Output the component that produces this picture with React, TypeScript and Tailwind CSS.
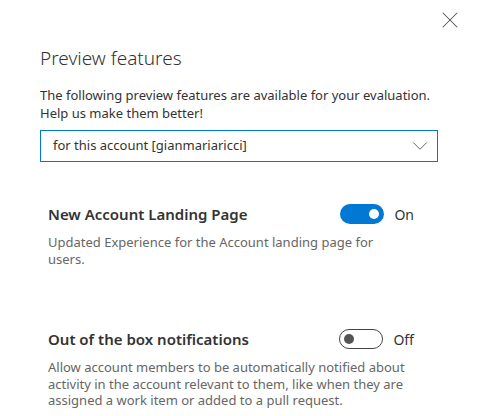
import { X, ChevronDown } from "lucide-react";

const features = [
  {
    title: "New Account Landing Page",
    on: true,
    desc: "Updated Experience for the Account landing page for users.",
  },
  {
    title: "Out of the box notifications",
    on: false,
    desc: "Allow account members to be automatically notified about activity in the account relevant to them, like when they are assigned a work item or added to a pull request.",
  },
];

function Toggle({ on }: { on: boolean }) {
  return (
    <div className="flex items-center gap-[10px]">
      {on ? (
        <div className="w-[44px] h-[20px] rounded-full bg-[#0078d4] flex items-center justify-end pr-[5px]">
          <div className="w-[10px] h-[10px] rounded-full bg-white" />
        </div>
      ) : (
        <div className="w-[44px] h-[20px] rounded-full border border-[#444] flex items-center pl-[4px]">
          <div className="w-[10px] h-[10px] rounded-full bg-[#555]" />
        </div>
      )}
      <span className="text-[14px] text-[#333]">{on ? "On" : "Off"}</span>
    </div>
  );
}

export default function App() {
  return (
    <div
      className="w-[478px] h-[416px] bg-white relative overflow-hidden"
      style={{ fontFamily: '"Noto Sans", "Open Sans", sans-serif' }}
    >
      <button className="absolute top-[6px] right-[14px] text-[#555]">
        <X size={28} strokeWidth={0.9} />
      </button>

      <div className="pt-[44px] pl-[40px] pr-[40px]">
        <h1 className="text-[19px] font-light text-[#333] leading-[28px]">Preview features</h1>

        <p className="mt-[14px] text-[13px] leading-[18px] text-[#333]">
          The following preview features are available for your evaluation.
          <br />
          Help us make them better!
        </p>

        <div className="mt-[8px] h-[32px] border border-[#0078d4] flex items-center justify-between pl-[12px] pr-[4px]">
          <span className="text-[13px] text-[#333]">for this account [gianmariaricci]</span>
          <ChevronDown size={26} strokeWidth={0.9} className="text-[#666]" />
        </div>

        <div className="pl-[8px] pr-[24px]">
          {features.map((f, i) => (
            <div key={i} className={i === 0 ? "mt-[42px]" : "mt-[62px]"}>
              <div className="flex items-center justify-between h-[20px]">
                <h2 className="text-[15px] font-semibold text-[#333]">{f.title}</h2>
                <Toggle on={f.on} />
              </div>
              <p className="mt-[10px] max-w-[362px] text-[13px] leading-[16.5px] text-[#666]">{f.desc}</p>
            </div>
          ))}
        </div>
      </div>
    </div>
  );
}
